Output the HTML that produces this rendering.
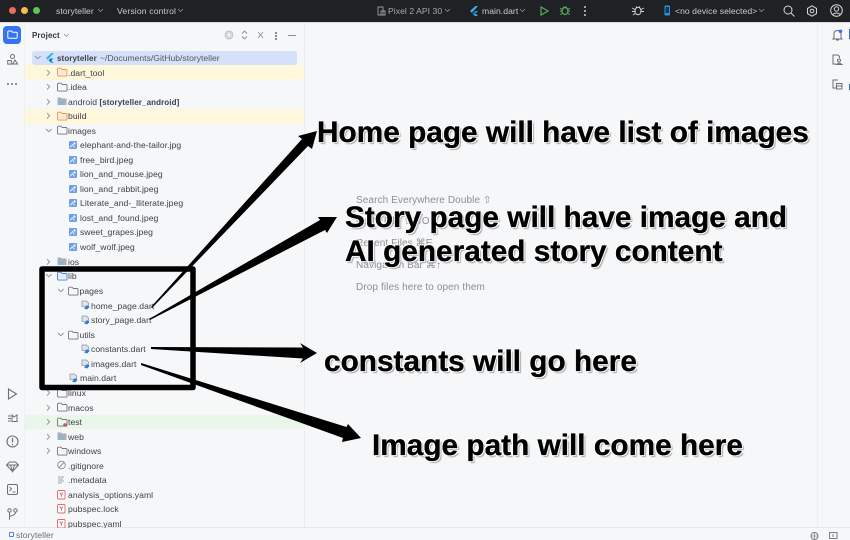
<!DOCTYPE html>
<html><head><meta charset="utf-8">
<style>
html,body{margin:0;padding:0;background:#f6f7f9}
#p{position:relative;width:850px;height:540px;overflow:hidden;background:#f6f7f9;font-family:"Liberation Sans","DejaVu Sans",sans-serif;filter:blur(.3px)}
.t{position:absolute;font-size:8.6px;line-height:12px;color:#3d3f45;white-space:nowrap;letter-spacing:.05px}
.t b{font-size:8px;letter-spacing:.1px}
.w{position:absolute;left:356px;font-size:10px;line-height:12px;color:#8b8e95;white-space:nowrap;letter-spacing:.1px}
.h{position:absolute;font-weight:bold;color:#000;white-space:nowrap;font-size:29.8px;line-height:32px;-webkit-text-stroke:.35px #000;text-shadow:1px 1px 0 #fff,-1px -1px 0 #fff,1px -1px 0 #fff,-1px 1px 0 #fff,2px 2px 1px #aaa}
.b{position:absolute;font-size:8.6px;line-height:12px;color:#c9ccd2;white-space:nowrap;letter-spacing:.05px}
.bg{position:absolute}
svg.i{position:absolute;overflow:visible}
</style></head><body><div id="p">

<svg width="0" height="0" style="position:absolute"><defs>
<g id="f"><path d="M.5 2.2q0-1 1-1h2.600l1.200 1.300h3.700q1 0 1 1v4.600q0 1-1 1h-7.500q-1 0-1-1z" fill="none" stroke="#74777e" stroke-width=".9"/></g>
<g id="fb"><path d="M.5 2.2q0-1 1-1h2.600l1.200 1.300h3.700q1 0 1 1v4.600q0 1-1 1h-7.500q-1 0-1-1z" fill="#e6edfb" stroke="#4a82e8" stroke-width=".9"/></g>
<g id="fo"><path d="M.5 2.2q0-1 1-1h2.600l1.200 1.300h3.700q1 0 1 1v4.600q0 1-1 1h-7.500q-1 0-1-1z" fill="#fbe9d6" stroke="#e29a5b" stroke-width=".9"/></g>
<g id="fg"><path d="M.5 1.500h3.600l1 1h4.400v6.500h-9z" fill="#a9b1b8"/><rect x="2" y="5" width="5" height="4" fill="#8fb5c9"/></g>
<g id="im"><rect x="0" y="0" width="8" height="8" rx="1" fill="#6f9fe6"/><circle cx="5.500" cy="2.500" r="1.100" fill="#fff"/><path d="M1 6.500l2.500-3 2 3" stroke="#fff" stroke-width=".8" fill="none"/></g>
<g id="d"><path d="M1 1h4.500l2 2v3.500H1z" fill="#dfe3e8" stroke="#8d98a6" stroke-width=".8"/><path d="M3 8.500l3-3.500 2.600 2-2.500 2.500z" fill="#2f7fd6"/></g>
<g id="cr"><path d="M0 0l2.600 2.800L0 5.600" fill="none" stroke="#8a8d94" stroke-width=".9"/></g>
<g id="cd"><path d="M0 0l2.800 2.800L5.600 0" fill="none" stroke="#8a8d94" stroke-width=".9"/></g>
<g id="y"><rect x=".5" y=".5" width="7.500" height="8.500" rx="1" fill="#fff" stroke="#e16a6a" stroke-width=".9"/><path d="M2.600 2.500l1.700 2.200 1.700-2.200M4.300 4.700v2.200" stroke="#d65050" stroke-width=".8" fill="none"/></g>
<g id="fl"><path d="M5.500 0L0 5l1.800 1.800L8 0zM4.500 5.500L2.500 7.500l2.500 2.500h3L5.500 7.500 8 5z" fill="#36b3f0"/><path d="M2.800 7.200L5 5.300l1 2-1 1.500z" fill="#1367b0"/></g>
</defs></svg>

<!-- title bar -->
<div class="bg" style="left:0;top:0;width:850px;height:22px;background:#202124"></div>
<div class="bg" style="left:0;top:22px;width:850px;height:1px;background:#d8dade"></div>
<div class="bg" style="left:9px;top:7px;width:7px;height:7px;border-radius:50%;background:#ee6a5f"></div>
<div class="bg" style="left:21px;top:7px;width:7px;height:7px;border-radius:50%;background:#f5bd4f"></div>
<div class="bg" style="left:33px;top:7px;width:7px;height:7px;border-radius:50%;background:#61c454"></div>
<div class="b" style="left:56px;top:5px">storyteller</div>
<svg class="i" style="left:98px;top:9px" width="6" height="4"><use href="#cd" transform="scale(.9)" /></svg>
<div class="b" style="left:117px;top:5px;letter-spacing:.15px">Version control</div>
<svg class="i" style="left:178px;top:9px" width="6" height="4"><use href="#cd" transform="scale(.9)"/></svg>

<svg class="i" style="left:377px;top:6px" width="10" height="10"><path d="M1 1h5v8H1zM4 5h4v4H4z" fill="none" stroke="#9a9da3" stroke-width=".9"/></svg>
<div class="b" style="left:388px;top:5px;color:#a6a9af">Pixel 2 API 30</div>
<svg class="i" style="left:445px;top:9px" width="6" height="4"><use href="#cd" transform="scale(.9)"/></svg>
<svg class="i" style="left:470px;top:6px" width="8" height="10"><use href="#fl"/></svg>
<div class="b" style="left:482px;top:5px">main.dart</div>
<svg class="i" style="left:520px;top:9px" width="6" height="4"><use href="#cd" transform="scale(.9)"/></svg>
<svg class="i" style="left:540px;top:6px" width="9" height="10"><path d="M1 1l7 4-7 4z" fill="none" stroke="#5fae62" stroke-width="1.100"/></svg>
<svg class="i" style="left:560px;top:5px" width="10" height="11"><ellipse cx="5" cy="6" rx="3" ry="3.500" fill="none" stroke="#5fae62" stroke-width="1.200"/><path d="M0 3l2 1.500M10 3L8 4.500M0 6h2M8 6h2M0 9.500l2-1M10 9.500l-2-1M3.500 1.500l1 1M6.500 1.500l-1 1" stroke="#5fae62" stroke-width=".9"/></svg>
<div class="bg" style="left:584px;top:6px;width:2px;height:2px;border-radius:50%;background:#c9ccd2;box-shadow:0 4px 0 #c9ccd2,0 8px 0 #c9ccd2"></div>
<svg class="i" style="left:632px;top:5px" width="12" height="12"><ellipse cx="6" cy="6" rx="3" ry="3.800" fill="none" stroke="#d5d7db" stroke-width="1"/><path d="M0 3l3 1.500M12 3L9 4.500M0 6.500h3M9 6.500h3M1 10l2-1.500M4 1.500l1 1M8 1.500l-1 1" stroke="#d5d7db" stroke-width=".9"/></svg>
<svg class="i" style="left:664px;top:5px" width="7" height="12"><rect x=".5" y=".5" width="5.500" height="10" rx="1" fill="#2b93d6"/><rect x="1.500" y="2" width="3.500" height="6" fill="#0d3a5c"/></svg>
<div class="b" style="left:675px;top:5px;letter-spacing:.05px">&lt;no device selected&gt;</div>
<svg class="i" style="left:759px;top:9px" width="6" height="4"><use href="#cd" transform="scale(.9)"/></svg>
<svg class="i" style="left:783px;top:5px" width="12" height="12"><circle cx="5" cy="5" r="4" fill="none" stroke="#d5d7db" stroke-width="1"/><path d="M8 8l3.500 3.500" stroke="#d5d7db" stroke-width="1"/></svg>
<svg class="i" style="left:806px;top:5px" width="12" height="12"><path d="M6 .8l4.500 2.600v5.200L6 11.200 1.500 8.600V3.400z" fill="none" stroke="#d5d7db" stroke-width="1"/><circle cx="6" cy="6" r="1.800" fill="none" stroke="#d5d7db" stroke-width="1"/></svg>
<svg class="i" style="left:830px;top:4px" width="13" height="13"><circle cx="6.500" cy="6.500" r="5.800" fill="none" stroke="#d5d7db" stroke-width="1"/><circle cx="6.500" cy="5" r="2.200" fill="none" stroke="#d5d7db" stroke-width="1"/><path d="M2.500 10.500q4-3 8 0" fill="none" stroke="#d5d7db" stroke-width="1"/></svg>

<!-- panels -->
<div class="bg" style="left:304px;top:23px;width:1px;height:504px;background:#ebedf0"></div>
<div class="bg" style="left:817px;top:23px;width:1px;height:504px;background:#ebedf0"></div>
<div class="bg" style="left:24px;top:23px;width:1px;height:504px;background:#eef0f3"></div>
<div class="bg" style="left:0;top:527px;width:850px;height:1px;background:#e6e8eb"></div>

<!-- left strip -->
<div class="bg" style="left:3px;top:26px;width:18px;height:18px;border-radius:4px;background:#3574f0"></div>
<svg class="i" style="left:7px;top:30px" width="11" height="10"><path d="M.8 2q0-1 1-1h2.500l1.200 1.300h3.700q1 0 1 1v4q0 1-1 1H1.800q-1 0-1-1z" fill="none" stroke="#fff" stroke-width="1"/></svg>
<svg class="i" style="left:7px;top:54px" width="11" height="11"><circle cx="5.500" cy="2.500" r="2" fill="none" stroke="#6c6f75"/><rect x=".7" y="6.500" width="3.600" height="3.600" fill="none" stroke="#6c6f75"/><path d="M8 6l2.500 4h-5z" fill="none" stroke="#6c6f75"/></svg>
<div class="bg" style="left:7px;top:83px;width:2px;height:2px;border-radius:50%;background:#6c6f75;box-shadow:4px 0 0 #6c6f75,8px 0 0 #6c6f75"></div>
<svg class="i" style="left:7px;top:388px" width="11" height="12"><path d="M1.500 1l8 5-8 5z" fill="none" stroke="#6c6f75" stroke-width="1.100"/></svg>
<svg class="i" style="left:7px;top:413px" width="12" height="11"><path d="M5 2l2 2 3-2v6.500H5zM1 3h3M1 5.500h3M1 8h3" fill="none" stroke="#6c6f75"/></svg>
<svg class="i" style="left:6px;top:435px" width="13" height="13"><circle cx="6.500" cy="6.500" r="5.500" fill="none" stroke="#6c6f75" stroke-width="1.100"/><path d="M6.500 3v4.500M6.500 9v1.200" stroke="#6c6f75" stroke-width="1.200"/></svg>
<svg class="i" style="left:6px;top:461px" width="13" height="11"><path d="M3.500 1h6l3 3-6 6.500L.5 4zM.5 4h12M4.500 4l2 6.500 2-6.500" fill="none" stroke="#6c6f75"/></svg>
<svg class="i" style="left:7px;top:484px" width="11" height="11"><rect x=".5" y=".5" width="10" height="10" rx="1.500" fill="none" stroke="#6c6f75"/><path d="M2.500 3l2 2-2 2M5.500 8h3" fill="none" stroke="#6c6f75" stroke-width=".9"/></svg>
<svg class="i" style="left:7px;top:508px" width="11" height="13"><circle cx="2.500" cy="2.500" r="1.700" fill="none" stroke="#6c6f75"/><circle cx="8.500" cy="2.500" r="1.700" fill="none" stroke="#6c6f75"/><path d="M2.500 4.200v7.500M8.500 4.200q0 3-6 4" fill="none" stroke="#6c6f75"/></svg>

<!-- right strip -->
<svg class="i" style="left:832px;top:29px" width="11" height="12"><path d="M2 9V5q0-3.500 3.500-3.500Q9 1.500 9 5v4l1 1H1zM4 11h3" fill="none" stroke="#6c6f75"/><circle cx="8.500" cy="2.300" r="1.800" fill="#3574f0"/></svg>
<svg class="i" style="left:832px;top:54px" width="11" height="12"><path d="M6 1H1v9h3M6 1l1.500 1.500V4" fill="none" stroke="#6c6f75"/><circle cx="7" cy="6.500" r="1.500" fill="none" stroke="#6c6f75"/><path d="M4.500 10.500q2.500-2.500 5.500 0z" fill="none" stroke="#6c6f75"/></svg>
<svg class="i" style="left:832px;top:79px" width="11" height="11"><path d="M6 1H1v8h3" fill="none" stroke="#6c6f75"/><rect x="4.500" y="4.500" width="5.500" height="5.500" fill="none" stroke="#6c6f75"/><path d="M4.500 7h5.500" stroke="#6c6f75"/></svg>
<div class="bg" style="left:849px;top:29px;width:1px;height:10px;background:#3a6fb8"></div>
<div class="bg" style="left:849px;top:84px;width:1px;height:6px;background:#3a6fb8"></div>

<!-- header -->
<div class="t" style="left:32px;top:29px;color:#33353a"><b>Project</b></div>
<svg class="i" style="left:64px;top:34px" width="6" height="4"><use href="#cd" transform="scale(.85)"/></svg>
<svg class="i" style="left:224px;top:30px" width="10" height="10"><circle cx="5" cy="5" r="4" fill="#d7d9dd" stroke="#b4b7bc" stroke-width=".7"/><circle cx="5" cy="5" r="1.300" fill="#f6f7f9"/></svg>
<svg class="i" style="left:241px;top:30px" width="7" height="10"><path d="M1 3.500L3.500 1 6 3.500M1 6.500L3.500 9 6 6.500" fill="none" stroke="#8a8d94" stroke-width=".9"/></svg>
<svg class="i" style="left:257px;top:31px" width="7" height="8"><path d="M1 1l5 6M6 1L1 7" fill="none" stroke="#8a8d94" stroke-width=".9"/></svg>
<div class="bg" style="left:275px;top:32px;width:1.500px;height:1.500px;background:#8a8d94;box-shadow:0 3px 0 #8a8d94,0 6px 0 #8a8d94"></div>
<div class="bg" style="left:288px;top:35px;width:8px;height:1px;background:#8a8d94"></div>

<!-- row highlights -->
<div class="bg" style="left:32px;top:50.500px;width:265px;height:14.500px;border-radius:3px;background:#d4e1f9"></div>
<div class="bg" style="left:25px;top:65px;width:279px;height:15px;background:#fef7dc"></div>
<div class="bg" style="left:25px;top:109px;width:279px;height:14.500px;background:#fef7dc"></div>
<div class="bg" style="left:25px;top:414.500px;width:279px;height:14.500px;background:#e9f6e9"></div>

<!-- tree -->
<svg class="i" style="left:35px;top:56px" width="6" height="4"><use href="#cd"/></svg>
<svg class="i" style="left:46px;top:53px" width="8" height="10"><use href="#fl"/></svg>
<div class="t" style="left:57px;top:52px"><b>storyteller</b></div>
<div class="t" style="left:100px;top:52px;font-size:8.6px;letter-spacing:0;color:#55585e">~/Documents/GitHub/storyteller</div>

<svg class="i" style="left:47px;top:70px" width="4" height="6"><use href="#cr"/></svg>
<svg class="i" style="left:57px;top:67px" width="10" height="10"><use href="#fo"/></svg>
<div class="t" style="left:68px;top:66.500px">.dart_tool</div>

<svg class="i" style="left:47px;top:84px" width="4" height="6"><use href="#cr"/></svg>
<svg class="i" style="left:57px;top:82px" width="10" height="10"><use href="#f"/></svg>
<div class="t" style="left:68px;top:81px">.idea</div>

<svg class="i" style="left:47px;top:99px" width="4" height="6"><use href="#cr"/></svg>
<svg class="i" style="left:57px;top:96px" width="10" height="10"><use href="#fg"/></svg>
<div class="t" style="left:68px;top:95.500px">android <b>[storyteller_android]</b></div>

<svg class="i" style="left:47px;top:113px" width="4" height="6"><use href="#cr"/></svg>
<svg class="i" style="left:57px;top:111px" width="10" height="10"><use href="#fo"/></svg>
<div class="t" style="left:68px;top:110px">build</div>

<svg class="i" style="left:46px;top:129px" width="6" height="4"><use href="#cd"/></svg>
<svg class="i" style="left:57px;top:125px" width="10" height="10"><use href="#f"/></svg>
<div class="t" style="left:68px;top:124.500px">images</div>

<svg class="i" style="left:69px;top:141px" width="8" height="8"><use href="#im"/></svg><div class="t" style="left:80px;top:139px">elephant-and-the-tailor.jpg</div>
<svg class="i" style="left:69px;top:156px" width="8" height="8"><use href="#im"/></svg><div class="t" style="left:80px;top:153.500px">free_bird.jpeg</div>
<svg class="i" style="left:69px;top:170px" width="8" height="8"><use href="#im"/></svg><div class="t" style="left:80px;top:168px">lion_and_mouse.jpeg</div>
<svg class="i" style="left:69px;top:185px" width="8" height="8"><use href="#im"/></svg><div class="t" style="left:80px;top:182.500px">lion_and_rabbit.jpeg</div>
<svg class="i" style="left:69px;top:199px" width="8" height="8"><use href="#im"/></svg><div class="t" style="left:80px;top:197px">Literate_and-_lliterate.jpeg</div>
<svg class="i" style="left:69px;top:214px" width="8" height="8"><use href="#im"/></svg><div class="t" style="left:80px;top:211.500px">lost_and_found.jpeg</div>
<svg class="i" style="left:69px;top:228px" width="8" height="8"><use href="#im"/></svg><div class="t" style="left:80px;top:226px">sweet_grapes.jpeg</div>
<svg class="i" style="left:69px;top:243px" width="8" height="8"><use href="#im"/></svg><div class="t" style="left:80px;top:240.500px">wolf_wolf.jpeg</div>

<svg class="i" style="left:47px;top:259px" width="4" height="6"><use href="#cr"/></svg>
<svg class="i" style="left:57px;top:256px" width="10" height="10"><use href="#fg"/></svg>
<div class="t" style="left:68px;top:255.500px">ios</div>

<svg class="i" style="left:46px;top:274px" width="6" height="4"><use href="#cd"/></svg>
<svg class="i" style="left:57px;top:271px" width="10" height="10"><use href="#fb"/></svg>
<div class="t" style="left:68px;top:270px">lib</div>

<svg class="i" style="left:58px;top:289px" width="6" height="4"><use href="#cd"/></svg>
<svg class="i" style="left:68px;top:286px" width="10" height="10"><use href="#f"/></svg>
<div class="t" style="left:79.500px;top:285px">pages</div>

<svg class="i" style="left:81px;top:300px" width="9" height="10"><use href="#d"/></svg><div class="t" style="left:91px;top:299.500px">home_page.dart</div>
<svg class="i" style="left:81px;top:315px" width="9" height="10"><use href="#d"/></svg><div class="t" style="left:91px;top:314px">story_page.dart</div>

<svg class="i" style="left:58px;top:333px" width="6" height="4"><use href="#cd"/></svg>
<svg class="i" style="left:68px;top:330px" width="10" height="10"><use href="#f"/></svg>
<div class="t" style="left:79.500px;top:328.500px">utils</div>

<svg class="i" style="left:81px;top:344px" width="9" height="10"><use href="#d"/></svg><div class="t" style="left:91px;top:343px">constants.dart</div>
<svg class="i" style="left:81px;top:359px" width="9" height="10"><use href="#d"/></svg><div class="t" style="left:91px;top:357.500px">images.dart</div>
<svg class="i" style="left:69px;top:373px" width="9" height="10"><use href="#d"/></svg><div class="t" style="left:80px;top:372px">main.dart</div>

<svg class="i" style="left:47px;top:390px" width="4" height="6"><use href="#cr"/></svg>
<svg class="i" style="left:57px;top:388px" width="10" height="10"><use href="#f"/></svg>
<div class="t" style="left:68px;top:387px">linux</div>
<svg class="i" style="left:47px;top:405px" width="4" height="6"><use href="#cr"/></svg>
<svg class="i" style="left:57px;top:402px" width="10" height="10"><use href="#f"/></svg>
<div class="t" style="left:68px;top:401.500px">macos</div>
<svg class="i" style="left:47px;top:419px" width="4" height="6"><use href="#cr"/></svg>
<svg class="i" style="left:57px;top:417px" width="10" height="10"><use href="#f"/><circle cx="8" cy="8" r="1.800" fill="#d65050"/></svg>
<div class="t" style="left:68px;top:416px">test</div>
<svg class="i" style="left:47px;top:434px" width="4" height="6"><use href="#cr"/></svg>
<svg class="i" style="left:57px;top:431px" width="10" height="10"><use href="#fg"/></svg>
<div class="t" style="left:68px;top:430.500px">web</div>
<svg class="i" style="left:47px;top:448px" width="4" height="6"><use href="#cr"/></svg>
<svg class="i" style="left:57px;top:446px" width="10" height="10"><use href="#f"/></svg>
<div class="t" style="left:68px;top:445px">windows</div>

<svg class="i" style="left:57px;top:460px" width="10" height="10"><circle cx="4.500" cy="5" r="3.800" fill="none" stroke="#8a8d94" stroke-width=".9"/><path d="M2 7.500L7 2.500" stroke="#8a8d94" stroke-width=".9"/></svg>
<div class="t" style="left:68px;top:459.500px">.gitignore</div>
<svg class="i" style="left:57px;top:476px" width="10" height="8"><path d="M1 1h6M1 3h5M1 5h6M1 7h4" stroke="#a6a9af" stroke-width="1"/></svg>
<div class="t" style="left:68px;top:474px">.metadata</div>
<svg class="i" style="left:57px;top:490px" width="9" height="10"><use href="#y"/></svg>
<div class="t" style="left:68px;top:488.500px">analysis_options.yaml</div>
<svg class="i" style="left:57px;top:504px" width="9" height="10"><use href="#y"/></svg>
<div class="t" style="left:68px;top:503px">pubspec.lock</div>
<svg class="i" style="left:57px;top:519px" width="9" height="10"><use href="#y"/></svg>
<div class="t" style="left:68px;top:517.500px">pubspec.yaml</div>

<!-- status bar -->
<div class="bg" style="left:0;top:528px;width:850px;height:12px;background:#f6f7f9"></div>
<div class="bg" style="left:9px;top:532px;width:3px;height:3px;border:1px solid #4a82e8;border-radius:1px"></div>
<div class="t" style="left:16px;top:529px;color:#6c6f75">storyteller</div>
<svg class="i" style="left:810px;top:532px" width="9" height="8"><circle cx="4.500" cy="4" r="3.500" fill="none" stroke="#7a7d83"/><path d="M1 4h7M4.500 .5v7" stroke="#7a7d83" stroke-width=".7"/></svg>
<svg class="i" style="left:829px;top:532px" width="9" height="8"><rect x=".5" y=".5" width="7.500" height="6" fill="none" stroke="#7a7d83"/><path d="M4 2v3" stroke="#7a7d83"/></svg>

<!-- welcome -->
<div class="w" style="top:195px">Search Everywhere Double ⇧</div>
<div class="w" style="top:216px">Go to File ⇧⌘O</div>
<div class="w" style="top:238px">Recent Files ⌘E</div>
<div class="w" style="top:260px">Navigation Bar ⌘↑</div>
<div class="w" style="top:282px">Drop files here to open them</div>

<!-- annotations -->
<svg class="i" style="left:0;top:0" width="850" height="540">
<rect x="42" y="269" width="151" height="118.500" fill="none" stroke="#000" stroke-width="5.500" stroke-linejoin="round"/>
<polygon fill="#000" points="151,307 302,139 298,136 317,131 312,149 308,146 152,308"/>
<polygon fill="#000" points="149,319 320,220 318,217 337,217 327,233 325,230 150,320"/>
<polygon fill="#000" points="151,347 303,347.500 300,343 317,353 300,363 303,358.500 151,349"/>
<polygon fill="#000" points="141,363 346.500,427 348,424 361,438 342,442 343,438 141,365"/>
</svg>

<div class="h" style="left:317px;top:117px">Home page will have list of images</div>
<div class="h" style="left:345px;top:202px">Story page will have image and</div>
<div class="h" style="left:345px;top:236px">AI generated story content</div>
<div class="h" style="left:324px;top:345.500px">constants will go here</div>
<div class="h" style="left:372px;top:430px">Image path will come here</div>

</div></body></html>
